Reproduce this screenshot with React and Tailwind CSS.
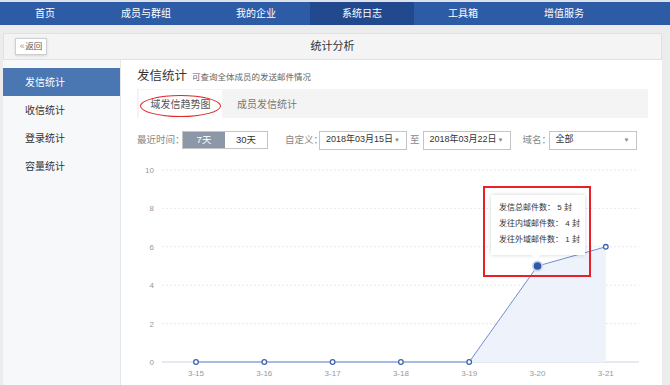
import React from 'react';

const navItems = [
  { label: '首页', w: 'w-[90px]' },
  { label: '成员与群组', w: 'w-[112px]' },
  { label: '我的企业', w: 'w-[108px]' },
  { label: '系统日志', w: 'w-[104px]', active: true },
  { label: '工具箱', w: 'w-[98px]' },
  { label: '增值服务', w: 'w-[104px]' },
];

const sideItems = ['发信统计', '收信统计', '登录统计', '容量统计'];

const days = ['3-15', '3-16', '3-17', '3-18', '3-19', '3-20', '3-21'];
const values = [0, 0, 0, 0, 0, 5, 6];

const Select = ({ value, w }) => (
  <div className={`${w} shrink-0 h-[19px] border border-[#c4c4c4] bg-white flex items-center justify-between px-[6px] text-[9px] text-[#333]`}>
    <span>{value}</span>
    <span className="text-[6px] text-[#888]">▼</span>
  </div>
);

const Chart = () => {
  const xs = days.map((_, i) => 75 + i * 68.3);
  const ys = values.map(v => 202 - v * 19.2);
  const linePts = xs.map((x, i) => `${x},${ys[i]}`).join(' ');
  return (
    <svg width="539" height="225" className="block">
      {[10, 8, 6, 4, 2].map((v, i) => (
        <line key={v} x1="41" x2="518" y1={10 + i * 38.4} y2={10 + i * 38.4} stroke="#e8e8e8" strokeDasharray="2 2" />
      ))}
      <line x1="41" x2="518" y1="202" y2="202" stroke="#c9d3e6" />
      {[10, 8, 6, 4, 2, 0].map((v, i) => (
        <text key={v} x="33" y={13 + i * 38.4} textAnchor="end" fontSize="8" fill="#999" fontFamily="Liberation Sans, sans-serif">{v}</text>
      ))}
      <polygon points={`${xs[4]},202 ${xs[5]},${ys[5]} ${xs[6]},${ys[6]} ${xs[6]},202`} fill="#edf2fb" />
      <polyline points={linePts} fill="none" stroke="#6f8fcc" strokeWidth="1" />
      {xs.map((x, i) => (i === 5 ? null : (
        <circle key={i} cx={x} cy={ys[i]} r="2.3" fill="#fff" stroke="#3d64b0" strokeWidth="1.3" />
      )))}
      <circle cx={xs[5]} cy={ys[5]} r="5.5" fill="#c9d6ef" />
      <circle cx={xs[5]} cy={ys[5]} r="3.8" fill="#2f58a6" />
      {days.map((d, i) => (
        <text key={d} x={xs[i]} y="216" textAnchor="middle" fontSize="8" fill="#999" fontFamily="Liberation Sans, sans-serif">{d}</text>
      ))}
    </svg>
  );
};

export default function App() {
  return (
    <div className="w-[670px] h-[385px] overflow-hidden bg-[#ececec] font-['Liberation_Sans','Noto_Sans_CJK_SC',sans-serif]">
      <div className="h-[2px] bg-[#dde2ea]" />
      <nav className="h-[23px] bg-[#2e5ba5] flex text-white text-[10px]">
        {navItems.map(item => (
          <div key={item.label} className={`${item.w} flex items-center justify-center ${item.active ? 'bg-[#22498d]' : ''}`}>
            {item.label}
          </div>
        ))}
      </nav>

      <div className="pt-[8px] pl-[3px] pr-[8px]">
        <div className="h-[27px] bg-[#f4f4f4] border border-[#e1e1e1] grid grid-cols-[1fr_auto_1fr] items-center px-[11px]">
          <div>
            <div className="w-[32px] h-[17px] border border-[#cfcfcf] bg-white flex items-center justify-center text-[8.5px] text-[#555] shadow-sm">
              <span className="text-[#999] mr-[1px]">«</span>返回
            </div>
          </div>
          <div className="text-[11px] text-[#333]">统计分析</div>
          <div />
        </div>

        <div className="flex h-[330px]">
          <aside className="w-[118px] shrink-0 bg-[#f7f8fa] border-r border-[#e6e6e6] pt-[8px]">
            {sideItems.map((s, i) => (
              <div key={s} className={`h-[28px] flex items-center pl-[22px] text-[10px] ${i === 0 ? 'bg-[#4a76b2] text-white' : 'text-[#333]'}`}>
                {s}
              </div>
            ))}
          </aside>

          <main className="flex-1 min-w-0 bg-white pl-[16px] pr-[14px] pt-[7px] whitespace-nowrap">
            <div className="flex items-baseline gap-[5px] h-[16px]">
              <span className="text-[12.5px] text-[#333]">发信统计</span>
              <span className="text-[8.5px] text-[#666]">可查询全体成员的发送邮件情况</span>
            </div>

            <div className="mt-[6px] h-[29px] bg-[#f4f4f4] flex pl-[2px] pt-[1px] text-[10px]">
              <div className="relative w-[83px] bg-white flex items-center justify-center text-[#555]">
                域发信趋势图
                <div className="absolute left-[1px] top-[5px] w-[81px] h-[22px] rounded-[50%] border-[1.5px] border-[#e0252b]" />
              </div>
              <div className="w-[90px] flex items-center justify-center text-[#777]">成员发信统计</div>
            </div>

            <div className="mt-[12px] h-[20px] flex items-center text-[9.5px] text-[#888]">
              <span className="w-[45px] shrink-0">最近时间：</span>
              <div className="flex h-[18px] border border-[#c4c4c4] shrink-0">
                <div className="w-[42px] bg-[#8c97a7] text-white flex items-center justify-center">7天</div>
                <div className="w-[42px] bg-white text-[#333] flex items-center justify-center">30天</div>
              </div>
              <span className="ml-[17px] w-[34px] shrink-0">自定义：</span>
              <Select value="2018年03月15日" w="w-[88px]" />
              <span className="mx-[3px] shrink-0">至</span>
              <Select value="2018年03月22日" w="w-[88px]" />
              <span className="ml-[12px] w-[26px] shrink-0">域名：</span>
              <Select value="全部" w="w-[88px]" />
            </div>

            <div className="relative mt-[10px] -ml-[16px] w-[539px]">
              <Chart />
              <div className="absolute left-[370px] top-[35px] w-[94px] h-[60px] bg-white shadow-[0_0_4px_rgba(0,0,0,0.18)] pl-[8px] pt-[5px] text-[8px] text-[#333] leading-[16px]">
                <div>发信总邮件数： 5 封</div>
                <div>发往内域邮件数： 4 封</div>
                <div>发往外域邮件数： 1 封</div>
                <div className="absolute left-[42px] -bottom-[3px] w-[6px] h-[6px] bg-white rotate-45" />
              </div>
              <div className="absolute left-[362px] top-[26px] w-[108px] h-[91px] border-2 border-[#e8202a]" />
            </div>
          </main>
        </div>
      </div>
    </div>
  );
}
